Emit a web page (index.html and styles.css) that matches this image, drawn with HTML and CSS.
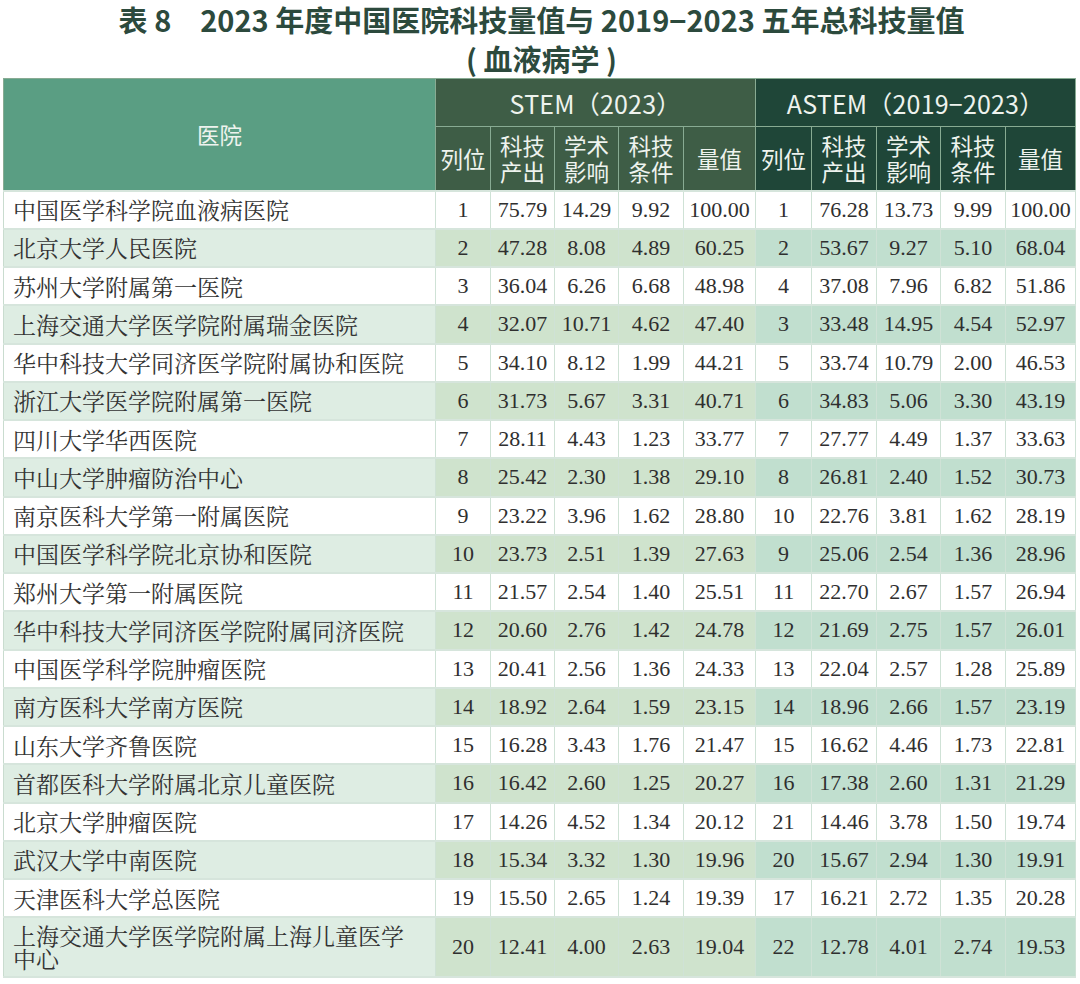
FILE: index.html
```html
<!DOCTYPE html>
<html lang="zh-CN">
<head>
<meta charset="utf-8">
<title>表8 血液病学</title>
<link rel="stylesheet" href="styles.css">
</head>
<body>
<div class="page">
  <h1 class="title">
    <span class="title-line">表 8　2023 年度中国医院科技量值与 2019−2023 五年总科技量值</span>
    <span class="title-line">( 血液病学 )</span>
  </h1>
  <table class="grid">
    <colgroup>
      <col class="c-name">
      <col class="c-rank"><col class="c-w64"><col class="c-w64"><col class="c-w65"><col class="c-val">
      <col class="c-rank2"><col class="c-w65"><col class="c-w64"><col class="c-w65"><col class="c-val2">
    </colgroup>
    <thead>
      <tr class="h1">
        <th rowspan="2" class="h-name">医院</th>
        <th colspan="5" class="h-stem big">STEM（2023）</th>
        <th colspan="5" class="h-astem big">ASTEM（2019−2023）</th>
      </tr>
      <tr class="h2">
        <th class="h-stem">列位</th>
        <th class="h-stem"><span class="ln">科技</span><span class="ln">产出</span></th>
        <th class="h-stem"><span class="ln">学术</span><span class="ln">影响</span></th>
        <th class="h-stem"><span class="ln">科技</span><span class="ln">条件</span></th>
        <th class="h-stem">量值</th>
        <th class="h-astem">列位</th>
        <th class="h-astem"><span class="ln">科技</span><span class="ln">产出</span></th>
        <th class="h-astem"><span class="ln">学术</span><span class="ln">影响</span></th>
        <th class="h-astem"><span class="ln">科技</span><span class="ln">条件</span></th>
        <th class="h-astem">量值</th>
      </tr>
    </thead>
    <tbody>
      <tr><td class="name">中国医学科学院血液病医院</td><td class="s">1</td><td class="s">75.79</td><td class="s">14.29</td><td class="s">9.92</td><td class="s">100.00</td><td class="a">1</td><td class="a">76.28</td><td class="a">13.73</td><td class="a">9.99</td><td class="a">100.00</td></tr>
      <tr><td class="name">北京大学人民医院</td><td class="s">2</td><td class="s">47.28</td><td class="s">8.08</td><td class="s">4.89</td><td class="s">60.25</td><td class="a">2</td><td class="a">53.67</td><td class="a">9.27</td><td class="a">5.10</td><td class="a">68.04</td></tr>
      <tr><td class="name">苏州大学附属第一医院</td><td class="s">3</td><td class="s">36.04</td><td class="s">6.26</td><td class="s">6.68</td><td class="s">48.98</td><td class="a">4</td><td class="a">37.08</td><td class="a">7.96</td><td class="a">6.82</td><td class="a">51.86</td></tr>
      <tr><td class="name">上海交通大学医学院附属瑞金医院</td><td class="s">4</td><td class="s">32.07</td><td class="s">10.71</td><td class="s">4.62</td><td class="s">47.40</td><td class="a">3</td><td class="a">33.48</td><td class="a">14.95</td><td class="a">4.54</td><td class="a">52.97</td></tr>
      <tr><td class="name">华中科技大学同济医学院附属协和医院</td><td class="s">5</td><td class="s">34.10</td><td class="s">8.12</td><td class="s">1.99</td><td class="s">44.21</td><td class="a">5</td><td class="a">33.74</td><td class="a">10.79</td><td class="a">2.00</td><td class="a">46.53</td></tr>
      <tr><td class="name">浙江大学医学院附属第一医院</td><td class="s">6</td><td class="s">31.73</td><td class="s">5.67</td><td class="s">3.31</td><td class="s">40.71</td><td class="a">6</td><td class="a">34.83</td><td class="a">5.06</td><td class="a">3.30</td><td class="a">43.19</td></tr>
      <tr><td class="name">四川大学华西医院</td><td class="s">7</td><td class="s">28.11</td><td class="s">4.43</td><td class="s">1.23</td><td class="s">33.77</td><td class="a">7</td><td class="a">27.77</td><td class="a">4.49</td><td class="a">1.37</td><td class="a">33.63</td></tr>
      <tr><td class="name">中山大学肿瘤防治中心</td><td class="s">8</td><td class="s">25.42</td><td class="s">2.30</td><td class="s">1.38</td><td class="s">29.10</td><td class="a">8</td><td class="a">26.81</td><td class="a">2.40</td><td class="a">1.52</td><td class="a">30.73</td></tr>
      <tr><td class="name">南京医科大学第一附属医院</td><td class="s">9</td><td class="s">23.22</td><td class="s">3.96</td><td class="s">1.62</td><td class="s">28.80</td><td class="a">10</td><td class="a">22.76</td><td class="a">3.81</td><td class="a">1.62</td><td class="a">28.19</td></tr>
      <tr><td class="name">中国医学科学院北京协和医院</td><td class="s">10</td><td class="s">23.73</td><td class="s">2.51</td><td class="s">1.39</td><td class="s">27.63</td><td class="a">9</td><td class="a">25.06</td><td class="a">2.54</td><td class="a">1.36</td><td class="a">28.96</td></tr>
      <tr><td class="name">郑州大学第一附属医院</td><td class="s">11</td><td class="s">21.57</td><td class="s">2.54</td><td class="s">1.40</td><td class="s">25.51</td><td class="a">11</td><td class="a">22.70</td><td class="a">2.67</td><td class="a">1.57</td><td class="a">26.94</td></tr>
      <tr><td class="name">华中科技大学同济医学院附属同济医院</td><td class="s">12</td><td class="s">20.60</td><td class="s">2.76</td><td class="s">1.42</td><td class="s">24.78</td><td class="a">12</td><td class="a">21.69</td><td class="a">2.75</td><td class="a">1.57</td><td class="a">26.01</td></tr>
      <tr><td class="name">中国医学科学院肿瘤医院</td><td class="s">13</td><td class="s">20.41</td><td class="s">2.56</td><td class="s">1.36</td><td class="s">24.33</td><td class="a">13</td><td class="a">22.04</td><td class="a">2.57</td><td class="a">1.28</td><td class="a">25.89</td></tr>
      <tr><td class="name">南方医科大学南方医院</td><td class="s">14</td><td class="s">18.92</td><td class="s">2.64</td><td class="s">1.59</td><td class="s">23.15</td><td class="a">14</td><td class="a">18.96</td><td class="a">2.66</td><td class="a">1.57</td><td class="a">23.19</td></tr>
      <tr><td class="name">山东大学齐鲁医院</td><td class="s">15</td><td class="s">16.28</td><td class="s">3.43</td><td class="s">1.76</td><td class="s">21.47</td><td class="a">15</td><td class="a">16.62</td><td class="a">4.46</td><td class="a">1.73</td><td class="a">22.81</td></tr>
      <tr><td class="name">首都医科大学附属北京儿童医院</td><td class="s">16</td><td class="s">16.42</td><td class="s">2.60</td><td class="s">1.25</td><td class="s">20.27</td><td class="a">16</td><td class="a">17.38</td><td class="a">2.60</td><td class="a">1.31</td><td class="a">21.29</td></tr>
      <tr><td class="name">北京大学肿瘤医院</td><td class="s">17</td><td class="s">14.26</td><td class="s">4.52</td><td class="s">1.34</td><td class="s">20.12</td><td class="a">21</td><td class="a">14.46</td><td class="a">3.78</td><td class="a">1.50</td><td class="a">19.74</td></tr>
      <tr><td class="name">武汉大学中南医院</td><td class="s">18</td><td class="s">15.34</td><td class="s">3.32</td><td class="s">1.30</td><td class="s">19.96</td><td class="a">20</td><td class="a">15.67</td><td class="a">2.94</td><td class="a">1.30</td><td class="a">19.91</td></tr>
      <tr><td class="name">天津医科大学总医院</td><td class="s">19</td><td class="s">15.50</td><td class="s">2.65</td><td class="s">1.24</td><td class="s">19.39</td><td class="a">17</td><td class="a">16.21</td><td class="a">2.72</td><td class="a">1.35</td><td class="a">20.28</td></tr>
      <tr class="tall"><td class="name"><span class="wrap">上海交通大学医学院附属上海儿童医学中心</span></td><td class="s">20</td><td class="s">12.41</td><td class="s">4.00</td><td class="s">2.63</td><td class="s">19.04</td><td class="a">22</td><td class="a">12.78</td><td class="a">4.01</td><td class="a">2.74</td><td class="a">19.53</td></tr>
    </tbody>
  </table>
</div>
</body>
</html>
```

FILE: styles.css
```css
html, body {
  margin: 0;
  padding: 0;
  background: #ffffff;
}

.page {
  width: 1080px;
  padding: 0 0 0 3px;
  box-sizing: border-box;
}

.title {
  margin: 0;
  padding: 0;
  height: 78px;
  display: flex;
  flex-direction: column;
  align-items: center;
  font-family: "Noto Sans CJK SC", "Noto Sans", sans-serif;
  font-weight: 700;
  font-size: 29px;
  line-height: 39px;
  color: #2c4a3d;
  box-sizing: border-box;
}

.title-line {
  display: block;
  white-space: nowrap;
}

.grid {
  border-collapse: collapse;
  table-layout: fixed;
  width: 1072px;
}

.c-name { width: 432px; }
.c-rank { width: 55px; }
.c-rank2 { width: 56px; }
.c-w64 { width: 64px; }
.c-w65 { width: 65px; }
.c-val { width: 72px; }
.c-val2 { width: 70px; }

.grid th {
  font-family: "Noto Sans CJK SC", "Noto Sans", sans-serif;
  font-weight: 400;
  color: #eef3ee;
  font-size: 22.5px;
  line-height: 26px;
  padding: 0;
  border: 1px solid #88ab93;
  text-align: center;
  vertical-align: middle;
}

.grid th .ln {
  display: block;
  height: 26px;
  line-height: 26px;
}

.h1 { height: 48px; }
.h2 { height: 64px; }

.h-name {
  background: #5a9e83;
  border-left-color: #5a9e83;
}

.h-stem {
  background: #3e5d46;
}

.h-astem {
  background: #1f4638;
  border-right-color: #1f4638;
}

.grid th.big {
  font-size: 25px;
  letter-spacing: 0.2px;
}

.grid td {
  padding: 0;
  border-top: 2px solid #d6e5dc;
  border-bottom: 2px solid #d6e5dc;
  border-left: 1px solid #cfe2d6;
  border-right: 1px solid #cfe2d6;
  text-align: center;
  vertical-align: middle;
  font-family: "Liberation Serif", "Times New Roman", serif;
  font-size: 22px;
  line-height: 24px;
  color: #2f2f2f;
}

.grid tbody tr {
  height: 38.26px;
}

.grid tbody tr.tall {
  height: 60px;
}

.grid td.name {
  text-align: left;
  padding: 0 4px 0 9px;
  font-family: "Noto Serif CJK SC", "Noto Sans CJK SC", serif;
  font-size: 23px;
  line-height: 23px;
  color: #333333;
  border-left-color: #c9dccf;
}

.grid td.name .wrap {
  display: block;
  max-width: 17.5em;
}

.grid tbody tr:nth-child(even) td.name { background: #deede3; }
.grid tbody tr:nth-child(even) td.s { background: #cfe3cd; }
.grid tbody tr:nth-child(even) td.a { background: #c1dfcf; }
```
